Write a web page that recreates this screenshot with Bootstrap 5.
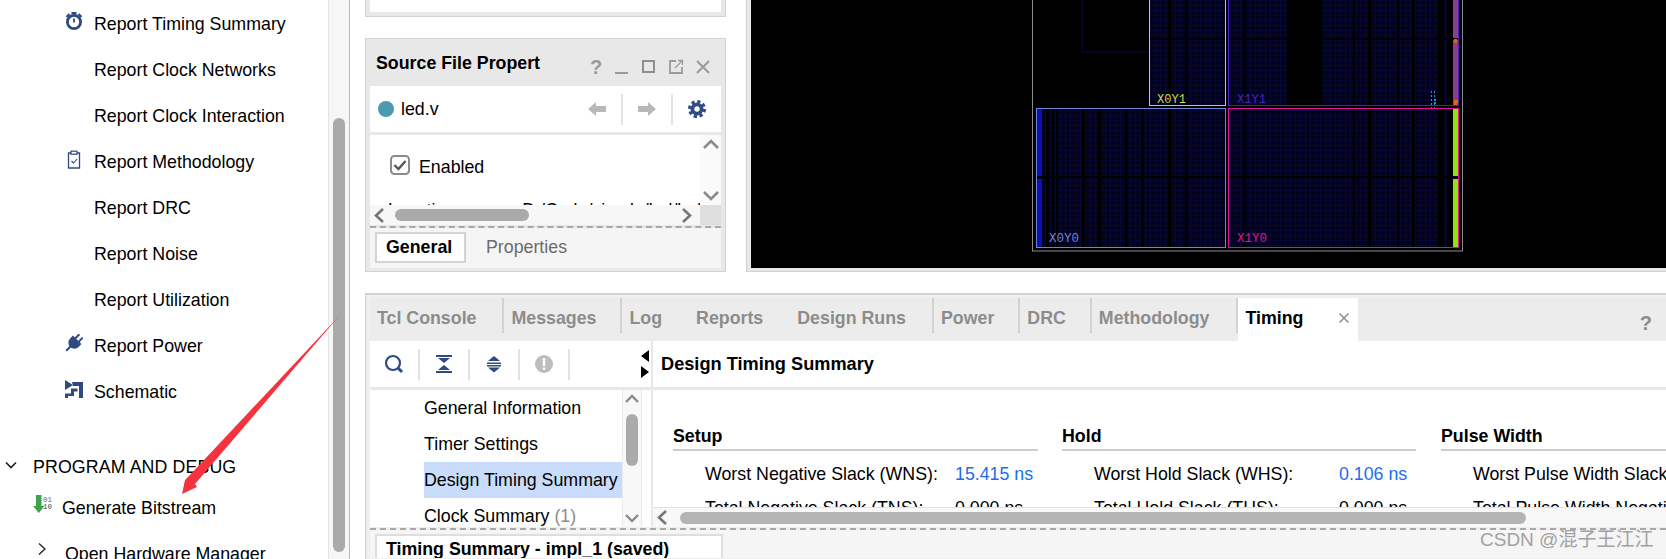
<!DOCTYPE html>
<html lang="en">
<head>
<meta charset="UTF-8">
<title>Vivado Timing Summary</title>
<link href="https://cdn.jsdelivr.net/npm/bootstrap@5.3.0/dist/css/bootstrap.min.css" rel="stylesheet">
<style>
body { width: 1666px; height: 559px; overflow: hidden; font-family: "Liberation Sans", Arial, sans-serif; font-size: 17.8px; color: #000; background: #fff; position: relative; line-height: 24px; }
/* left flow navigator */
.vv-side { width: 350px; height: 559px; flex: none; border-right: 1px solid #b9b9b9; }
.vv-flow { width: 328px; padding-top: 1px; }
.vv-row { height: 46px; padding-left: 94px; position: relative; }
.vv-row > svg { position: absolute; left: 65px; top: 11px; }
.vv-section { height: 30px; margin-top: 37px; padding-left: 33px; position: relative; letter-spacing: .1px; }
.vv-section > svg { position: absolute; left: 5px; top: 7px; }
.vv-gen { height: 40px; padding-left: 62px; margin-top: 6px; position: relative; }
.vv-gen > svg { position: absolute; left: 33px; top: 7px; }
.vv-open { height: 40px; padding-left: 65px; margin-top: 2px; position: relative; padding-top: 8px; }
.vv-open > svg { position: absolute; left: 37px; top: 12px; }
.vv-track { width: 21px; border-left: 1px solid #e4e4e4; background: #f6f6f6; padding: 118px 4px 0; }
.vv-vthumb { background: #aaa; border-radius: 6px; height: 434px; width: 12px; }
/* top area */
.vv-main { padding-left: 15px; min-width: 0; }
.vv-top { height: 272px; gap: 20px; }
.vv-srccol { width: 361px; flex: none; }
.vv-pane { background: #e8e8e8; border: 1px solid #d2d2d2; padding: 0 4px 4px; }
.vv-stub { height: 18px; margin-top: -1px; border-top: 0; }
.vv-stub div { height: 13px; background: #fff; }
.vv-props { height: 234px; margin-top: 21px; }
.vv-title { height: 47px; padding: 0 9px 0 6px; font-weight: 700; }
.vv-winicons { gap: 9px; margin-top: 8px; }
.vv-filebar { height: 46px; background: #fff; padding: 0 15px 0 8px; margin-bottom: 3px; }
.vv-dot { width: 16px; height: 16px; border-radius: 50%; background: #4b9ab5; margin-right: 7px; }
.vv-tools { gap: 15px; }
.vv-sep { width: 2px; height: 31px; background: #e2e2e2; }
.vv-propbody { height: 90px; background: #fff; position: relative; }
.vv-propview { height: 70px; overflow: hidden; }
.vv-enabled { height: 67px; padding: 20px 0 0 20px; }
.vv-check { width: 20px; height: 20px; margin: 0 9px 0 0 !important; border: 2px solid #8c8c8c; border-radius: 4px; flex: none; }
.vv-check:checked { background-color: #fff; border-color: #8c8c8c; background-image: url("data:image/svg+xml,%3csvg xmlns='http://www.w3.org/2000/svg' viewBox='0 0 20 20'%3e%3cpath fill='none' stroke='%23555' stroke-width='3' d='M3 10l5 5 9-10'/%3e%3c/svg%3e"); background-size: 100%; }
.vv-loc { padding-left: 18px; gap: 62px; }
.vv-vscroll { width: 21px; height: 70px; background: #fafafa; flex: none; }
.vv-hscroll1 { height: 20px; background: #f7f7f7; }
.vv-hthumb1 { width: 134px; height: 12px; background: #aaa; border-radius: 6px; margin-left: 11px; }
.vv-corner { width: 21px; height: 20px; background: #dedede; }
.vv-dashed { border-top: 2px dashed #a8a8a8; margin-top: 1px; }
.vv-subtabs { height: 40px; background: #f5f5f5; padding: 4px 0 0 5px; }
.vv-subactive { height: 31px; background: #fff; border: 2px solid #d4d4d4; font-weight: 700; padding: 0 9px; line-height: 27px; width: 91px; }
.vv-subtab { color: #6b6b6b; margin-left: 20px; line-height: 31px; }
.vv-device { border: 1px solid #d2d2d2; border-top: 0; border-right: 0; padding: 0 0 3px 4px; background: #e8e8e8; flex: 1; min-width: 0; }
.vv-device svg { display: block; }
/* bottom area */
.vv-bottom { height: 266px; margin-top: 21px; background: #efefef; border-top: 2px solid #d2d2d2; border-left: 1px solid #d2d2d2; padding: 3px 0 0 4px; }
.vv-tabs { height: 43px; background: #ececec; flex-wrap: nowrap; margin: 0; align-items: stretch; }
.vv-tabs .nav-link { color: #8c8c8c; font-weight: 700; padding: 8px 24px 0 7px; height: 35px; border-right: 2px solid #d2d2d2; white-space: nowrap; }
.vv-tabs .vv-nosep { border-right: 0; padding-right: 27px; }
.vv-tabs .vv-first { padding-right: 26px; }
.vv-tabs .vv-runs { padding-right: 26px; }
.vv-tabs .vv-meth { padding-right: 27px; }
.vv-tabs .active { background: #fff; color: #000; border: 0; height: 43px; width: 120px; padding-right: 0; position: relative; }
.vv-close { position: absolute; left: 100px; top: 14px; }
.vv-help { color: #8c8c8c; font-weight: 700; font-size: 20px; margin: 13px 14px 0 auto; }
.vv-work { height: 186px; background: #fff; }
.vv-leftcol { width: 281px; flex: none; }
.vv-bar { height: 46px; background: #fff; }
.vv-toolgrp { gap: 14px; padding-left: 14px; }
.vv-split { margin-left: auto; margin-right: 1px; }
.vv-treewrap { border-top: 3px solid #e8e8e8; height: 140px; }
.vv-tree { width: 252px; height: 137px; overflow: hidden; padding-left: 54px; }
.vv-tree li { height: 36px; line-height: 36px; white-space: nowrap; }
.vv-tree .vv-sel { background: #c9dcfb; }
.vv-count { color: #8c8c8c; }
.vv-vscroll2 { width: 20px; height: 137px; background: #f8f8f8; border-left: 1px solid #ececec; border-right: 1px solid #ececec; }
.vv-vthumb2 { width: 12px; height: 52px; background: #aaa; border-radius: 6px; margin: 11px auto 48px; flex: none; }
.vv-rightcol { border-left: 2px solid #e8e8e8; min-width: 0; flex: 1; }
.vv-heading { font-size: 18.2px; font-weight: 700; padding-left: 8px; height: 46px; }
.vv-summary { height: 120px; overflow: hidden; border-top: 3px solid #e8e8e8; padding: 33px 0 0 20px; gap: 24px; }
.vv-group { flex: none; }
.vv-group h6 { font-size: 17.8px; font-weight: 700; margin: 0 0 6px; line-height: 27px; height: 28px; border-bottom: 2px solid #ccc; }
.vv-setup { width: 365px; }
.vv-hold { width: 354px; }
.vv-pulse { flex: 1 0 300px; margin-left: 1px; overflow: hidden; }
.vv-setup .vv-label { width: 250px; }
.vv-hold .vv-label { width: 245px; }
.vv-metric { height: 34px; padding-left: 32px; white-space: nowrap; line-height: 34px; }
.vv-value { color: #1a6ef0; }
.vv-hscroll2 { height: 20px; background: #f8f8f8; border-top: 1px solid #e2e2e2; }
.vv-hthumb2 { width: 846px; height: 12px; background: #b4b4b4; border-radius: 6px; margin-left: 13px; }
.vv-footer { height: 28px; background: #f5f5f5; padding: 4px 0 0 5px; overflow: hidden; }
.vv-reptab { width: 348px; height: 40px; background: #fff; border: 2px solid #dedede; font-weight: 700; padding: 1px 9px 0; }
.vv-mark { position: absolute; left: 1480px; top: 528px; color: #a2a2a2; font-family: "Liberation Sans", "Noto Sans CJK SC", sans-serif; font-size: 19px; }
.vv-arrow { position: absolute; left: 0; top: 0; pointer-events: none; }
.vv-svgtext { font-family: "Liberation Mono", monospace; }
</style>
</head>
<body class="d-flex">

<!-- flow navigator -->
<aside class="vv-side d-flex">
  <div class="vv-flow flex-grow-1">
    <ul class="list-unstyled m-0">
      <li class="vv-row d-flex align-items-center">
        <svg width="18" height="18" viewBox="0 0 18 18" fill="none" stroke="#2f4a7f"><circle cx="9" cy="10" r="6.600" stroke-width="2.800"/><path d="M9 6.500V10.500" stroke-width="1.800"/><path d="M1.500 5L4.500 2M13.500 2L16.500 5M6.500 1.200H11.500" stroke-width="2.200"/></svg>
        Report Timing Summary
      </li>
      <li class="vv-row d-flex align-items-center">Report Clock Networks</li>
      <li class="vv-row d-flex align-items-center">Report Clock Interaction</li>
      <li class="vv-row d-flex align-items-center">
        <svg width="18" height="19" viewBox="0 0 18 19" fill="none" stroke="#2f4a7f"><path d="M6 3H3.500V18H14.500V3H12" stroke-width="1.300"/><rect x="6" y="1.200" width="6" height="3" stroke-width="1.200"/><path d="M6.500 11l2 2 3.500-4" stroke-width="1.100"/></svg>
        Report Methodology
      </li>
      <li class="vv-row d-flex align-items-center">Report DRC</li>
      <li class="vv-row d-flex align-items-center">Report Noise</li>
      <li class="vv-row d-flex align-items-center">Report Utilization</li>
      <li class="vv-row d-flex align-items-center">
        <svg width="18" height="18" viewBox="0 0 18 18" fill="#2f4a7f"><g transform="rotate(45 9 9)"><rect x="5.600" y="-1" width="2" height="6"/><rect x="10.400" y="-1" width="2" height="6"/><path d="M3 4.500H15V8.500a6 6 0 0 1-12 0Z"/><rect x="8" y="13" width="2" height="7"/></g></svg>
        Report Power
      </li>
      <li class="vv-row d-flex align-items-center">
        <svg width="18" height="18" viewBox="0 0 18 18" fill="#2f4a7f"><path d="M0 0L8 5L0 10Z"/><path d="M7 2H18V18H14V6H8Z"/><path d="M0 18V13.500H6V8.500H12.500V11.500H9V16H3V18Z"/></svg>
        Schematic
      </li>
    </ul>
    <div class="vv-section d-flex align-items-center">
      <svg width="12" height="12" viewBox="0 0 12 12" fill="none" stroke="#222" stroke-width="1.700"><path d="M1 3.500L6 8.500L11 3.500"/></svg>
      PROGRAM AND DEBUG
    </div>
    <div class="vv-gen d-flex align-items-center">
      <svg width="19" height="20" viewBox="0 0 19 20"><path fill="#3fa34a" d="M3 0H8.500V11H11.500L5.800 18L0 11H3Z"/><text class="vv-svgtext" x="10" y="7" font-size="7.500" fill="#666">01</text><text class="vv-svgtext" x="10" y="14" font-size="7.500" fill="#444">10</text></svg>
      Generate Bitstream
    </div>
    <div class="vv-open d-flex align-items-center">
      <svg width="10" height="14" viewBox="0 0 10 14" fill="none" stroke="#222" stroke-width="1.300"><path d="M2 1.500L8 7L2 12.500"/></svg>
      Open Hardware Manager
    </div>
  </div>
  <div class="vv-track"><div class="vv-vthumb"></div></div>
</aside>

<main class="vv-main flex-grow-1 d-flex flex-column">
  <div class="vv-top d-flex">
    <div class="vv-srccol">
      <div class="vv-pane vv-stub"><div></div></div>
      <section class="vv-pane vv-props">
        <div class="vv-title d-flex align-items-center justify-content-between">
          <span>Source File Propert</span>
          <div class="vv-winicons d-flex align-items-center">
            <svg width="18" height="18" viewBox="0 0 18 18"><text x="4" y="16" font-size="20" font-weight="700" fill="#9a9a9a" font-family="Liberation Sans">?</text></svg>
            <svg width="18" height="18" viewBox="0 0 18 18"><rect x="2" y="14" width="13" height="2" fill="#9a9a9a"/></svg>
            <svg width="18" height="18" viewBox="0 0 18 18" fill="none" stroke="#8f8f8f" stroke-width="2"><rect x="3" y="3" width="11" height="11"/></svg>
            <svg width="18" height="18" viewBox="0 0 18 18" fill="none" stroke="#9a9a9a" stroke-width="1.800"><path d="M9 3H3V15H15V9"/><path d="M8 10L15 3M11 2.500H15.500V7" stroke-width="1.300"/></svg>
            <svg width="18" height="18" viewBox="0 0 18 18" fill="none" stroke="#9a9a9a" stroke-width="2"><path d="M3 3L15 15M15 3L3 15"/></svg>
          </div>
        </div>
        <div class="vv-filebar d-flex align-items-center">
          <span class="vv-dot"></span><span>led.v</span>
          <div class="vv-tools d-flex align-items-center ms-auto">
            <svg width="18" height="14" viewBox="0 0 18 14" fill="#b8b8b8"><path d="M0 7L8 0V4H18V10H8V14Z"/></svg>
            <span class="vv-sep"></span>
            <svg width="18" height="14" viewBox="0 0 18 14" fill="#b8b8b8"><path d="M18 7L10 0V4H0V10H10V14Z"/></svg>
            <span class="vv-sep"></span>
            <svg width="18" height="18" viewBox="0 0 18 18"><circle cx="9" cy="9" r="6.500" fill="#2f4a85"/><circle cx="9" cy="9" r="7.500" fill="none" stroke="#2f4a85" stroke-width="3" stroke-dasharray="3.200 2.690"/><circle cx="9" cy="9" r="2.700" fill="#fff"/></svg>
          </div>
        </div>
        <div class="vv-propbody">
          <div class="d-flex">
            <div class="vv-propview flex-grow-1">
              <div class="vv-enabled d-flex align-items-start">
                <input class="form-check-input vv-check" type="checkbox" checked>
                <span class="lh-1 pt-1">Enabled</span>
              </div>
              <div class="vv-loc d-flex lh-1"><span>Location:</span><span>D:/Code/vivado/led/led</span></div>
            </div>
            <div class="vv-vscroll d-flex flex-column justify-content-between align-items-center py-1">
              <svg width="16" height="10" viewBox="0 0 16 10" fill="none" stroke="#8a8a8a" stroke-width="2.600"><path d="M1 9L8 2L15 9"/></svg>
              <svg width="16" height="10" viewBox="0 0 16 10" fill="none" stroke="#8a8a8a" stroke-width="2.600"><path d="M1 1L8 8L15 1"/></svg>
            </div>
          </div>
          <div class="d-flex">
            <div class="vv-hscroll1 flex-grow-1 d-flex align-items-center">
              <svg class="ms-1" width="10" height="15" viewBox="0 0 10 15" fill="none" stroke="#777" stroke-width="2.600"><path d="M9 1L2 7.500L9 14"/></svg>
              <div class="vv-hthumb1"></div>
              <svg class="ms-auto me-2" width="10" height="15" viewBox="0 0 10 15" fill="none" stroke="#777" stroke-width="2.600"><path d="M1 1L8 7.500L1 14"/></svg>
            </div>
            <div class="vv-corner"></div>
          </div>
        </div>
        <div class="vv-dashed"></div>
        <div class="vv-subtabs d-flex align-items-start">
          <div class="vv-subactive">General</div>
          <div class="vv-subtab">Properties</div>
        </div>
      </section>
    </div>

    <!-- device view, a free canvas -->
    <div class="vv-device">
      <svg width="915" height="268" viewBox="751 0 915 268">
        <defs>
          <pattern id="fabric" width="5" height="5" patternUnits="userSpaceOnUse">
            <rect width="5" height="5" fill="#02021a"/>
            <path d="M0 .5H5M.5 0V5" stroke="#070736" stroke-width="1"/>
          </pattern>
        </defs>
        <rect x="751" y="0" width="915" height="268" fill="#000"/>
        <path d="M1082 0V52H1149" fill="none" stroke="#0a0a40"/>
        <rect x="1032.500" y="-5" width="430" height="256" fill="none" stroke="#8a8a8a"/>
        <!-- fabric -->
        <rect x="1037" y="109" width="189" height="138" fill="url(#fabric)"/>
        <rect x="1229" y="109" width="229" height="138" fill="url(#fabric)"/>
        <rect x="1150" y="0" width="76" height="105" fill="url(#fabric)"/>
        <rect x="1229" y="0" width="229" height="105" fill="url(#fabric)"/>
        <!-- black columns -->
        <g fill="#000">
          <rect x="1046" y="109" width="3" height="138"/>
          <rect x="1052" y="109" width="2" height="138"/>
          <rect x="1056" y="109" width="2" height="138"/>
          <rect x="1082" y="109" width="3" height="138"/>
          <rect x="1098" y="109" width="3" height="138"/>
          <rect x="1125" y="109" width="3" height="138"/>
          <rect x="1141" y="109" width="3" height="138"/>
          <rect x="1168" y="0" width="3" height="247"/>
          <rect x="1185" y="0" width="3" height="247"/>
          <rect x="1243" y="0" width="3" height="247"/>
          <rect x="1287" y="0" width="35" height="105"/>
          <rect x="1353" y="0" width="2" height="247"/>
          <rect x="1368" y="0" width="3" height="247"/>
          <rect x="1397" y="0" width="2" height="247"/>
          <rect x="1412" y="0" width="3" height="247"/>
          <rect x="1438" y="0" width="6" height="247"/>
          <rect x="1447" y="0" width="6" height="247"/>
          <rect x="1037" y="176" width="421" height="2"/>
          <rect x="1150" y="38" width="308" height="2"/>
        </g>
        <!-- edge IO columns -->
        <rect x="1037" y="109" width="5" height="67" fill="#1010b0"/>
        <rect x="1037" y="179" width="5" height="68" fill="#1010b0"/>
        <rect x="1453" y="109" width="5" height="67" fill="#8ee50e"/>
        <rect x="1453" y="179" width="5" height="68" fill="#8ee50e"/>
        <rect x="1453" y="0" width="5" height="38" fill="#8c3d8c"/>
        <rect x="1453" y="40" width="5" height="66" fill="#8c3d8c"/>
        <rect x="1454" y="39" width="3" height="4" fill="#f06010"/>
        <path d="M1454 100h4v3h-1v2h-3z" fill="#f06010"/>
        <!-- clock regions -->
        <rect x="1149.500" y="-5" width="76" height="110.500" fill="none" stroke="#c8d84a"/>
        <rect x="1228.500" y="-5" width="230" height="110.500" fill="none" stroke="#4a20c0"/>
        <rect x="1036.500" y="108.500" width="189" height="139" fill="none" stroke="#6f86d6"/>
        <rect x="1228.500" y="108.500" width="230" height="139" fill="none" stroke="#e0109a"/>
        <!-- small used cells -->
        <path d="M1431.500 91V108M1434.500 91V108" stroke="#1a9bb0" stroke-dasharray="2 2"/>
        <rect x="1434" y="99" width="2" height="2" fill="#1a9bb0"/>
        <rect x="1434" y="102" width="2" height="2" fill="#1a9bb0"/>
        <g class="vv-svgtext" font-size="13">
          <text x="1157" y="103" fill="#c8d84a" textLength="29" lengthAdjust="spacingAndGlyphs">X0Y1</text>
          <text x="1237" y="103" fill="#4a20c0" textLength="29" lengthAdjust="spacingAndGlyphs">X1Y1</text>
          <text x="1049" y="242" fill="#6f86d6" textLength="30" lengthAdjust="spacingAndGlyphs">X0Y0</text>
          <text x="1237" y="242" fill="#e0109a" textLength="30" lengthAdjust="spacingAndGlyphs">X1Y0</text>
        </g>
      </svg>
    </div>
  </div>

  <section class="vv-bottom">
    <ul class="nav vv-tabs">
      <li class="nav-item"><a class="nav-link vv-first" href="#">Tcl Console</a></li>
      <li class="nav-item"><a class="nav-link" href="#">Messages</a></li>
      <li class="nav-item"><a class="nav-link vv-nosep" href="#">Log</a></li>
      <li class="nav-item"><a class="nav-link vv-nosep" href="#">Reports</a></li>
      <li class="nav-item"><a class="nav-link vv-runs" href="#">Design Runs</a></li>
      <li class="nav-item"><a class="nav-link" href="#">Power</a></li>
      <li class="nav-item"><a class="nav-link" href="#">DRC</a></li>
      <li class="nav-item"><a class="nav-link vv-meth" href="#">Methodology</a></li>
      <li class="nav-item">
        <a class="nav-link active" href="#">Timing
          <svg class="vv-close" width="12" height="12" viewBox="0 0 12 12" fill="none" stroke="#8c8c8c" stroke-width="1.500"><path d="M1.500 1.500L10.500 10.500M10.500 1.500L1.500 10.500"/></svg>
        </a>
      </li>
      <li class="vv-help">?</li>
    </ul>

    <div class="vv-work d-flex">
      <div class="vv-leftcol">
        <div class="vv-bar d-flex align-items-center">
          <div class="vv-toolgrp d-flex align-items-center">
            <svg width="20" height="20" viewBox="0 0 20 20" fill="none" stroke="#2f4a85"><circle cx="9" cy="9" r="7" stroke-width="2.200"/><path d="M14 14L18 18" stroke-width="3"/></svg>
            <span class="vv-sep"></span>
            <svg width="20" height="20" viewBox="0 0 20 20" fill="#2f4a85"><path d="M2 1H18V3H2ZM4 4H16L10 9ZM10 11L16 16H4ZM2 17H18V19H2Z"/></svg>
            <span class="vv-sep"></span>
            <svg width="20" height="20" viewBox="0 0 20 20" fill="#2f4a85"><path d="M10 2L16 7H4ZM3 8.500H17V10H3ZM3 11H17V12.500H3ZM4 13.500H16L10 18.500Z"/></svg>
            <span class="vv-sep"></span>
            <svg width="20" height="20" viewBox="0 0 20 20"><circle cx="10" cy="10" r="9" fill="#bdbdbd"/><rect x="8.800" y="4" width="2.400" height="8" fill="#fff"/><rect x="8.800" y="13.500" width="2.400" height="2.400" fill="#fff"/></svg>
            <span class="vv-sep"></span>
          </div>
          <svg class="vv-split" width="10" height="30" viewBox="0 0 10 30"><path d="M9 1L1 7L9 13Z M1 17L9 23L1 29Z" fill="#000"/></svg>
        </div>
        <div class="vv-treewrap d-flex">
          <ul class="vv-tree list-unstyled m-0">
            <li>General Information</li>
            <li>Timer Settings</li>
            <li class="vv-sel">Design Timing Summary</li>
            <li>Clock Summary <span class="vv-count">(1)</span></li>
          </ul>
          <div class="vv-vscroll2 d-flex flex-column align-items-center">
            <svg class="mt-1 flex-shrink-0" width="14" height="9" viewBox="0 0 14 9" fill="none" stroke="#8a8a8a" stroke-width="2.400"><path d="M1 8L7 2L13 8"/></svg>
            <div class="vv-vthumb2"></div>
            <svg class="flex-shrink-0" width="14" height="9" viewBox="0 0 14 9" fill="none" stroke="#8a8a8a" stroke-width="2.400"><path d="M1 1L7 7L13 1"/></svg>
          </div>
        </div>
      </div>
      <div class="vv-rightcol">
        <div class="vv-heading d-flex align-items-center">Design Timing Summary</div>
        <div class="vv-summary d-flex">
          <div class="vv-group vv-setup">
            <h6>Setup</h6>
            <div class="vv-metric d-flex"><span class="vv-label">Worst Negative Slack (WNS):</span><span class="vv-value">15.415 ns</span></div>
            <div class="vv-metric d-flex"><span class="vv-label">Total Negative Slack (TNS):</span><span>0.000 ns</span></div>
          </div>
          <div class="vv-group vv-hold">
            <h6>Hold</h6>
            <div class="vv-metric d-flex"><span class="vv-label">Worst Hold Slack (WHS):</span><span class="vv-value">0.106 ns</span></div>
            <div class="vv-metric d-flex"><span class="vv-label">Total Hold Slack (THS):</span><span>0.000 ns</span></div>
          </div>
          <div class="vv-group vv-pulse">
            <h6>Pulse Width</h6>
            <div class="vv-metric d-flex"><span>Worst Pulse Width Slack (WPWS):</span></div>
            <div class="vv-metric d-flex"><span>Total Pulse Width Negative Slack (TPWS):</span></div>
          </div>
        </div>
        <div class="vv-hscroll2 d-flex align-items-center">
          <svg class="ms-1" width="10" height="15" viewBox="0 0 10 15" fill="none" stroke="#777" stroke-width="2.600"><path d="M9 1L2 7.500L9 14"/></svg>
          <div class="vv-hthumb2"></div>
        </div>
      </div>
    </div>
    <div class="vv-dashed"></div>
    <div class="vv-footer">
      <div class="vv-reptab">Timing Summary - impl_1 (saved)</div>
    </div>
  </section>
</main>

<div class="vv-mark">CSDN @混子王江江</div>

<!-- red annotation arrow drawn over the screenshot -->
<svg class="vv-arrow" width="1666" height="559" viewBox="0 0 1666 559">
  <path fill="#f5333f" d="M340 315L195 484L197 487L182 494L185 480L188 477Z"/>
</svg>

<script src="https://cdn.jsdelivr.net/npm/bootstrap@5.3.0/dist/js/bootstrap.bundle.min.js"></script>
</body>
</html>
